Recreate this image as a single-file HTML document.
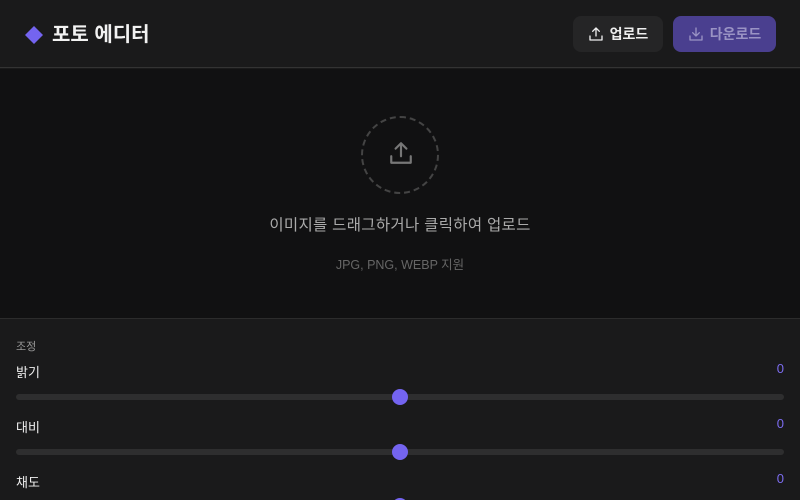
<!DOCTYPE html>
<html><head><meta charset="utf-8"><style>
*{margin:0;padding:0;box-sizing:border-box}
html,body{width:800px;height:500px;overflow:hidden}
body{background:#1a1a1b;font-family:"Liberation Sans","Noto Sans CJK KR",sans-serif;color:#eee;position:relative}
.hdr{position:absolute;left:0;top:0;width:800px;height:68px;background:#1a1a1b;border-bottom:1px solid #333}
.logo{position:absolute;left:24px;top:22px;font-size:20px;font-weight:700;color:#f2f2f2;display:flex;align-items:center;gap:8px;line-height:26px}
.btn{position:absolute;top:16px;height:36px;border-radius:8px;font-size:14px;font-weight:700;display:flex;align-items:center;justify-content:center;gap:6px}
.b1{left:573px;width:90px;background:#252526;color:#eee}
.b2{left:673px;width:103px;background:#4a3f8f;color:#9a93c4}
.drop{position:absolute;left:0;top:69px;width:800px;height:250px;background:#111112;border-bottom:1px solid #2c2c2c}
.circ{position:absolute;left:361px;top:47px;width:78px;height:78px;border:2px dashed #444;border-radius:50%}
.t1{position:absolute;top:144px;width:800px;text-align:center;font-size:15.5px;letter-spacing:0.3px;color:#aaa}
.t2{position:absolute;top:185px;width:800px;text-align:center;font-size:12.5px;color:#666}
.sec{position:absolute;left:16px;top:338px;font-size:11px;color:#999}
.lbl{position:absolute;left:16px;font-size:13px;color:#eee}
.val{position:absolute;right:16px;font-size:13px;color:#7c6cf0}
.track{position:absolute;left:16px;width:768px;height:6px;border-radius:3px;background:#2e2e2f}
.thumb{position:absolute;left:392px;width:16px;height:16px;border-radius:50%;background:#7464f0}
</style></head><body>
<div class="hdr">
<div class="logo"><svg width="20" height="20" viewBox="0 0 20 20"><path d="M10 1 L19 10 L10 19 L1 10Z" fill="#7464f0"/></svg>포토 에디터</div>
<div class="btn b1"><svg width="16" height="16" viewBox="0 0 24 24" fill="none" stroke="#eee" stroke-width="2" stroke-linecap="round" stroke-linejoin="round"><path d="M12 15V3M7 8l5-5 5 5M3 15v6h18v-6"/></svg>업로드</div>
<div class="btn b2"><svg width="16" height="16" viewBox="0 0 24 24" fill="none" stroke="#9a93c4" stroke-width="2" stroke-linecap="round" stroke-linejoin="round"><path d="M12 3v12M7 10l5 5 5-5M3 15v6h18v-6"/></svg>다운로드</div>
</div>
<div class="drop">
<div class="circ"><svg style="position:absolute;left:25px;top:22px" width="26" height="26" viewBox="0 0 24 24" fill="none" stroke="#777" stroke-width="2" stroke-linecap="round" stroke-linejoin="round"><path d="M12 15V3M7 8l5-5 5 5M3 15v6h18v-6"/></svg></div>
<div class="t1">이미지를 드래그하거나 클릭하여 업로드</div>
<div class="t2">JPG, PNG, WEBP 지원</div>
</div>
<div class="sec">조정</div>
<div class="lbl" style="top:362px">밝기</div><div class="val" style="top:361px">0</div>
<div class="track" style="top:394px"></div><div class="thumb" style="top:389px"></div>
<div class="lbl" style="top:417px">대비</div><div class="val" style="top:416px">0</div>
<div class="track" style="top:449px"></div><div class="thumb" style="top:444px"></div>
<div class="lbl" style="top:472px">채도</div><div class="val" style="top:471px">0</div>
<div class="thumb" style="top:498px"></div>
</body></html>
